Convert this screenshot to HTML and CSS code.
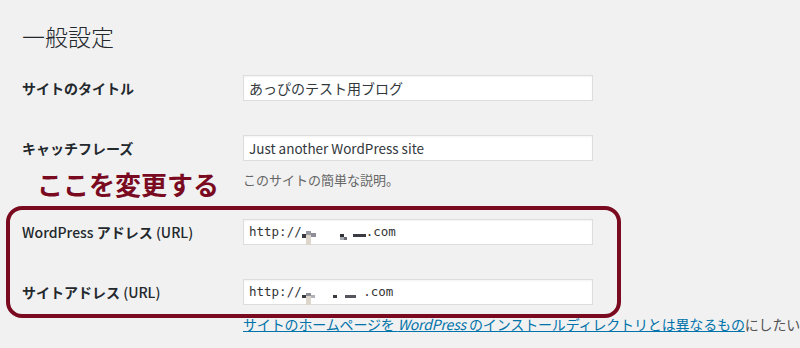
FILE: index.html
```html
<!DOCTYPE html>
<html lang="ja">
<head>
    <meta charset="UTF-8">
    <title>一般設定</title>
    <link rel="stylesheet" href="styles.css">
</head>
<body>

    <div class="wrap">
        <h1>一般設定</h1>

        <!-- Settings form -->
        <div class="form-table">
            <div class="row">
                <label class="row-label">サイトのタイトル</label>
                <div class="field">
                    <div class="text-input">あっぴのテスト用ブログ</div>
                </div>
            </div>

            <div class="row row-desc">
                <label class="row-label">キャッチフレーズ</label>
                <div class="field">
                    <div class="text-input latin-input">Just another WordPress site</div>
                    <p class="description">このサイトの簡単な説明。</p>
                </div>
            </div>

            <div class="row">
                <label class="row-label"><span class="latin">WordPress</span> アドレス <span class="latin">(URL)</span></label>
                <div class="field">
                    <div class="text-input code">http://<span class="blur">
                        <i class="px d1"></i><i class="px tall"></i><i class="px g1"></i><i class="gap w24"></i><i class="px d2"></i><i class="px g2"></i><i class="gap w6"></i><i class="px bar"></i>
                    </span>.com</div>
                </div>
            </div>

            <div class="row row-desc">
                <label class="row-label">サイトアドレス <span class="latin">(URL)</span></label>
                <div class="field">
                    <div class="text-input code">http://<span class="blur">
                        <i class="px d3"></i><i class="px tall2"></i><i class="px g3"></i><i class="gap w18"></i><i class="px d3"></i><i class="gap w8"></i><i class="px bar2"></i>
                    </span> .com</div>
                    <p class="description link-line"><a href="#">サイトのホームページを <em>WordPress</em> のインストールディレクトリとは異なるもの</a>にしたい</p>
                </div>
            </div>
        </div>

        <!-- Annotation -->
        <div class="note">ここを変更する</div>
        <div class="note-box"></div>
    </div>

</body>
</html>
```

FILE: styles.css
```css
:root {
    --color-bg: #f1f1f1;
    --color-text: #23282d;
    --color-input-text: #32373c;
    --color-desc: #666666;
    --color-link: #0073aa;
    --color-note: #7a0a1f;
    --font-jp: "Noto Sans CJK JP", "Noto Sans", sans-serif;
    --font-mono: "DejaVu Sans Mono", "Liberation Mono", monospace;
}

* {
    margin: 0;
    padding: 0;
    box-sizing: border-box;
}

body {
    background-color: var(--color-bg);
    color: var(--color-text);
    font-family: var(--font-jp);
    font-size: 14px;
    overflow: hidden;
}

.wrap {
    position: relative;
    padding: 22px 0 0 22px;
    height: 348px;
}

h1 {
    font-size: 23px;
    font-weight: 300;
    line-height: 29px;
    margin-bottom: 7px;
}

/* Rows: label column + field column */
.row {
    display: grid;
    grid-template-columns: 221px 350px;
    align-items: start;
    padding: 17px 0;
}

.row-desc {
    padding-bottom: 12px;
}

.row-label {
    font-weight: 700;
    line-height: 26px;
    white-space: nowrap;
}

.row-label .latin {
    font-weight: 500;
}

.text-input {
    height: 26px;
    background: #fff;
    border: 1px solid #dddddd;
    box-shadow: inset 0 1px 2px rgba(0, 0, 0, 0.05);
    padding: 0 5px;
    line-height: 24px;
    color: var(--color-input-text);
    white-space: nowrap;
}

.latin-input {
    font-size: 13.5px;
}

.text-input.code {
    font-family: var(--font-mono);
    font-size: 12.5px;
    color: #333;
}

/* mosaic over the domain name */
.blur {
    display: inline-flex;
    align-items: flex-start;
    height: 14px;
    vertical-align: -2px;
}

.px {
    display: inline-block;
    height: 4px;
}

.gap { display: inline-block; }
.w6 { width: 6px; }
.w8 { width: 8px; }
.w18 { width: 18px; }
.w24 { width: 24px; }

.d1 { width: 4px; background: #3a3a40; margin-top: 3px; }
.tall { width: 5px; height: 14px; background: linear-gradient(#9a9aa2 0 4px, #ddd6cc 4px); }
.g1 { width: 5px; background: #8e8f98; margin-top: 2px; }
.d2 { width: 4px; height: 6px; background: linear-gradient(#303036 0 3px, #a8aab4 3px); margin-top: 3px; }
.g2 { width: 3px; background: #6a6a74; margin-top: 6px; height: 3px; }
.bar { width: 13px; height: 3px; background: #3b3b44; margin-top: 3px; }

.d3 { width: 4px; background: #3a3a40; margin-top: 5px; height: 3px; }
.tall2 { width: 5px; height: 12px; background: linear-gradient(#8d8d95 0 3px, #ddd6cc 3px); margin-top: 3px; }
.g3 { width: 4px; background: #b0b2ba; margin-top: 5px; height: 3px; }
.bar2 { width: 11px; height: 3px; background: #55555e; margin-top: 5px; }

.description {
    margin-top: 9px;
    font-size: 13px;
    line-height: 20px;
    color: var(--color-desc);
    white-space: nowrap;
}

.link-line {
    font-size: 14px;
    letter-spacing: -0.15px;
    color: #555;
}

.link-line a {
    color: var(--color-link);
    text-decoration: underline;
}

/* Red annotation */
.note {
    position: absolute;
    top: 171px;
    left: 37px;
    font-size: 26px;
    font-weight: 700;
    line-height: 26px;
    color: var(--color-note);
    white-space: nowrap;
}

.note-box {
    position: absolute;
    top: 206px;
    left: 6px;
    width: 615px;
    height: 112px;
    border: 4px solid var(--color-note);
    border-radius: 16px;
}
```
